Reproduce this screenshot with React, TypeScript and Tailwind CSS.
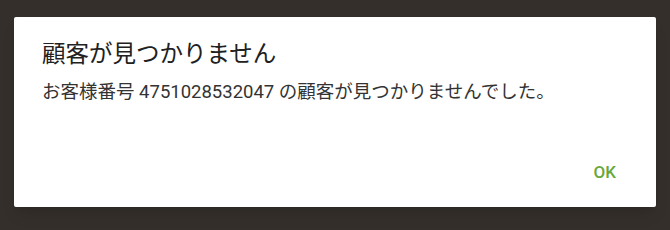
export default function App() {
  return (
    <div
      className="w-[670px] h-[230px] bg-[#342f2a] pt-[17px] pl-[14px]"
      style={{ fontFamily: 'Roboto, "Noto Sans CJK JP", sans-serif' }}
    >
      <div className="w-[642px] h-[190px] bg-white rounded-[2px] shadow-lg flex flex-col pl-[28px] pr-[40px]">
        <h1 className="pt-[21px] text-[23.5px] leading-[32px] text-[#212121]">
          顧客が見つかりません
        </h1>
        <p className="mt-[10px] text-[18.5px] leading-[24px] text-[#333333]">
          お客様番号 4751028532047 の顧客が見つかりませんでした。
        </p>
        <div className="flex justify-end mt-[56px]">
          <button className="text-[17px] leading-[24px] font-medium text-[#68a83a]">
            OK
          </button>
        </div>
      </div>
    </div>
  );
}
